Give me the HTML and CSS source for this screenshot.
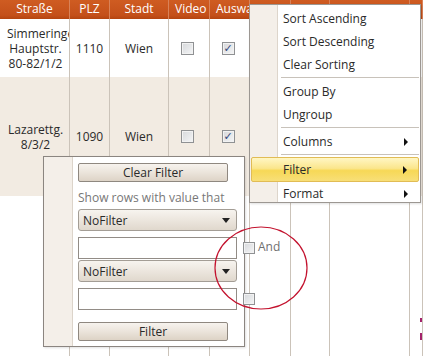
FILE: index.html
```html
<!DOCTYPE html>
<html>
<head>
<meta charset="utf-8">
<link rel="stylesheet" href="styles.css">
</head>
<body>
<div class="grid">
  <div class="hcell">Straße</div>
  <div class="hcell">PLZ</div>
  <div class="hcell">Stadt</div>
  <div class="hcell">Video</div>
  <div class="hcell">Auswahl</div>
  <div class="hcell"></div>
  <div class="hcell"></div>
  <div class="hcell"></div>
  <div class="hcell"></div>

  <div class="cell white"><span class="street"><span>Simmeringer</span><span>Hauptstr.</span><span>80-82/1/2</span></span></div>
  <div class="cell white">1110</div>
  <div class="cell white">Wien</div>
  <div class="cell white"><span class="cb"></span></div>
  <div class="cell white"><span class="cb checked">✓</span></div>
  <div class="cell white"></div>
  <div class="cell white"></div>
  <div class="cell white"></div>
  <div class="cell white"></div>

  <div class="cell alt"><span class="street"><span>Lazarettg.</span><span>8/3/2</span></span></div>
  <div class="cell alt">1090</div>
  <div class="cell alt">Wien</div>
  <div class="cell alt"><span class="cb"></span></div>
  <div class="cell alt"><span class="cb checked">✓</span></div>
  <div class="cell alt"></div>
  <div class="cell alt"></div>
  <div class="cell alt"></div>
  <div class="cell alt"></div>

  <div class="cell fill"></div>
  <div class="cell fill"></div>
  <div class="cell fill"></div>
  <div class="cell fill"></div>
  <div class="cell fill"></div>
  <div class="cell fill"></div>
  <div class="cell fill"></div>
  <div class="cell fill"></div>
  <div class="cell fill last"><span class="mark m1"></span><span class="mark m2"></span></div>
</div>

<div class="popup">
  <div class="strip"></div>
  <div class="pcontent">
    <div class="btn">Clear Filter</div>
    <div class="label">Show rows with value that</div>
    <div class="combo first"><span>NoFilter</span><span class="arrow"></span></div>
    <div class="frow r-a"><div class="tbox"></div><span class="cb small"></span><span class="and">And</span></div>
    <div class="combo second"><span>NoFilter</span><span class="arrow"></span></div>
    <div class="frow r-b"><div class="tbox"></div><span class="cb small"></span></div>
    <div class="btn fbtn">Filter</div>
  </div>
</div>

<div class="menu">
  <div class="mstrip"></div>
  <div class="mitems">
    <div class="mi">Sort Ascending</div>
    <div class="mi">Sort Descending</div>
    <div class="mi">Clear Sorting</div>
    <div class="sep"></div>
    <div class="mi">Group By</div>
    <div class="mi">Ungroup</div>
    <div class="sep"></div>
    <div class="mi sub">Columns<span class="tri"></span></div>
    <div class="sep"></div>
    <div class="mi sub hl">Filter<span class="tri"></span></div>
    <div class="mi sub">Format<span class="tri"></span></div>
  </div>
</div>

<svg class="circle" width="96" height="86" viewBox="0 0 96 86">
  <ellipse cx="48" cy="43" rx="46" ry="41" fill="none" stroke="#c3122e" stroke-width="1.2"/>
</svg>
</body>
</html>
```

FILE: styles.css
```css
html, body {
  margin: 0;
  padding: 0;
  background: #fff;
}
body {
  font-family: "Open Sans", "Noto Sans", sans-serif;
  font-size: 12px;
  color: #2a2a2a;
  width: 423px;
  height: 356px;
  overflow: hidden;
  position: relative;
}
.grid {
  display: grid;
  grid-template-columns: 70px 40px 59px 41px 40px 41px 39px 80px 13px;
  grid-template-rows: 19px 58px 119px 160px;
  height: 356px;
  width: 423px;
  overflow: hidden;
}
.hcell {
  background: linear-gradient(#cf5c22, #c4501a 80%, #b4440f);
  color: #fff;
  text-align: center;
  line-height: 18px;
  padding: 0 6px;
  border-right: 1px solid #d98258;
  overflow: hidden;
  white-space: nowrap;
}
.cell {
  border-right: 1px solid #cbc3b9;
  display: flex;
  align-items: center;
  justify-content: center;
  text-align: center;
  overflow: hidden;
  line-height: 15px;
  min-height: 0;
}
.white { background: #fff; }
.alt { background: #f2ebe2; }
.fill { background: #fff; }
.street {
  box-sizing: border-box;
  width: 100%;
  padding: 0 5px 0 7px;
  display: flex;
  flex-direction: column;
  align-items: safe center;
  white-space: nowrap;
}
.cb {
  display: inline-block;
  box-sizing: border-box;
  flex-shrink: 0;
  width: 13px;
  height: 13px;
  margin-left: -3px;
  border: 1px solid #8f9193;
  background: linear-gradient(135deg, #d6d8db, #f4f5f6);
  box-shadow: inset 0 0 0 1px #f2f2f2;
  font-size: 11px;
  line-height: 11px;
  color: #33457a;
  font-weight: bold;
  text-align: center;
  font-family: "DejaVu Sans", sans-serif;
}
.cb.small {
  width: 12px;
  height: 12px;
  margin-left: 0;
}
.last {
  flex-direction: column;
  align-items: flex-end;
  justify-content: flex-start;
  padding-top: 122px;
}
.mark {
  display: block;
  width: 2px;
  background: #a3226b;
}
.m1 { height: 4px; }
.m2 { height: 7px; margin-top: 11px; }

/* filter popup */
.popup {
  position: absolute;
  left: 43px;
  top: 156px;
  width: 200px;
  height: 189px;
  border: 1px solid #8b8580;
  background: #fff;
  display: flex;
  box-shadow: 1px 1px 2px rgba(0,0,0,0.12);
}
.strip {
  width: 28px;
  flex-shrink: 0;
  background: #f4efe9;
  border-right: 1px solid #dcd4ca;
}
.pcontent {
  padding: 6px 0 0 5px;
  display: flex;
  flex-direction: column;
  flex: 1;
  min-width: 0;
}
.btn {
  box-sizing: border-box;
  width: 150px;
  height: 19px;
  flex-shrink: 0;
  border: 1px solid #8f8880;
  border-radius: 2px;
  background: linear-gradient(#f7f3ee, #ebe4db 50%, #ddd3c6);
  text-align: center;
  line-height: 17px;
  color: #2a2a2a;
}
.label {
  margin-top: 8px;
  line-height: 16px;
  color: #777;
  white-space: nowrap;
}
.combo {
  box-sizing: border-box;
  width: 159px;
  height: 22px;
  flex-shrink: 0;
  border: 1px solid #a39d95;
  border-radius: 3px;
  background: linear-gradient(#f7f4ef, #ece6de 50%, #e0d8cd);
  display: flex;
  align-items: center;
  justify-content: space-between;
  padding: 0 6px 0 4px;
  color: #2a2a2a;
}
.combo.first { margin-top: 3px; }
.combo.second { margin-top: 1px; }
.arrow {
  width: 0;
  height: 0;
  border-left: 4px solid transparent;
  border-right: 4px solid transparent;
  border-top: 5px solid #222;
}
.frow {
  display: flex;
  align-items: center;
  gap: 6px;
  height: 22px;
  flex-shrink: 0;
}
.r-a { margin-top: 6px; }
.r-b { margin-top: 6px; }
.tbox {
  box-sizing: border-box;
  flex-shrink: 0;
  width: 159px;
  height: 22px;
  border: 1px solid #928c86;
  background: #fff;
}
.and {
  color: #6f6f6f;
  margin-left: -3px;
  margin-top: -3px;
  white-space: nowrap;
}
.fbtn { margin-top: 12px; }

/* context menu */
.menu {
  position: absolute;
  left: 249px;
  top: 4px;
  width: 170px;
  height: 197px;
  border: 1px solid #9c9792;
  background: #fff;
  display: flex;
  box-shadow: 1px 1px 2px rgba(0,0,0,0.12);
}
.mstrip {
  width: 27px;
  flex-shrink: 0;
  background: #f4efe9;
  border-right: 1px solid #ddd5cb;
}
.mitems {
  flex: 1;
  min-width: 0;
  padding-top: 2px;
  display: flex;
  flex-direction: column;
}
.mi {
  height: 23px;
  line-height: 23px;
  padding-left: 5px;
  color: #2a2a2a;
  display: flex;
  align-items: center;
  justify-content: space-between;
  padding-right: 12px;
  flex-shrink: 0;
}
.sep {
  height: 4px;
  flex-shrink: 0;
  margin-left: 3px;
  margin-right: 1px;
  box-sizing: border-box;
  border-bottom: 2px solid #fff;
  border-top: 1px solid #fff;
  background: #c8c2ba;
}
.tri {
  width: 0;
  height: 0;
  border-top: 4px solid transparent;
  border-bottom: 4px solid transparent;
  border-left: 4px solid #111;
}
.mi.hl {
  margin-left: -27px;
  padding-left: 31px;
  margin-right: 1px;
  padding-right: 11px;
  border: 1px solid #e1bc55;
  border-radius: 2px;
  height: 23px;
  background: linear-gradient(#fff6c4, #fbe68c 45%, #f7d856 55%, #f8df78);
}

.circle {
  position: absolute;
  left: 213px;
  top: 225px;
}
```
